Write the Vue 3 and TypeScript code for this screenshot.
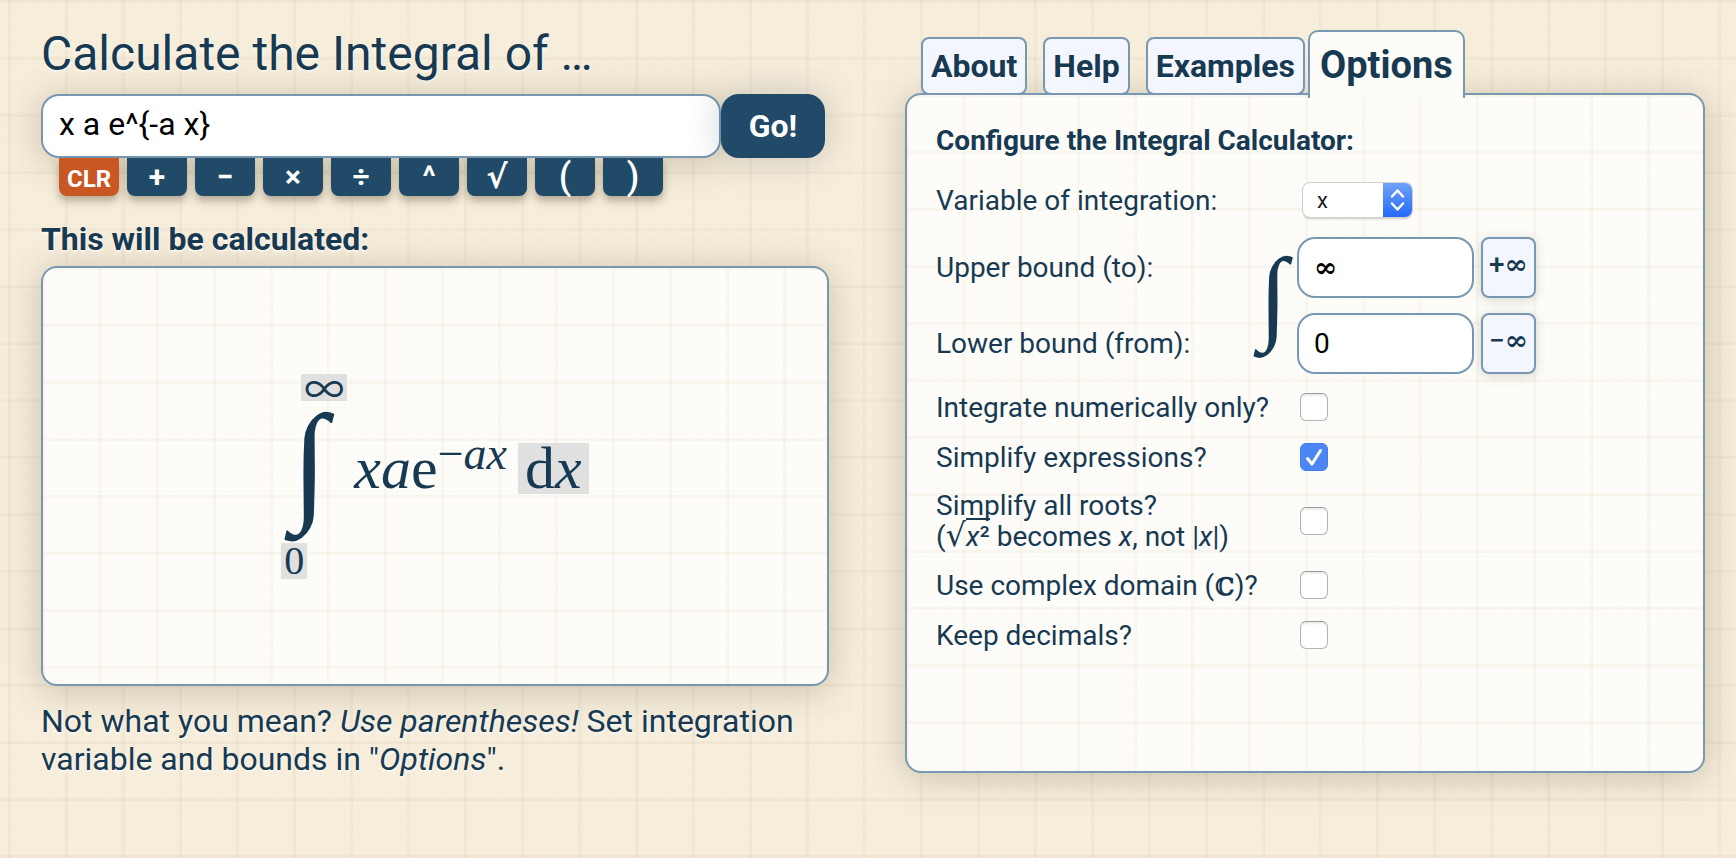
<script setup lang="ts">
import { ref } from 'vue'

interface Check {
  id: string
  label: string
  checked: boolean
}

const expression = ref('x a e^{-a x}')
const operators = ['+', '−', '×', '÷', '^', '√', '(', ')']
const tallOperators = ['(', ')']
const tabs = ['About', 'Help', 'Examples', 'Options']
const activeTab = ref('Options')
const variable = ref('x')
const upper = ref('∞')
const lower = ref('0')
const checks = ref<Check[]>([
  { id: 'numeric', label: 'Integrate numerically only?', checked: false },
  { id: 'simplify', label: 'Simplify expressions?', checked: true },
  { id: 'roots', label: '', checked: false },
  { id: 'complex', label: '', checked: false },
  { id: 'decimals', label: 'Keep decimals?', checked: false },
])
</script>

<template>
  <main class="page">
    <section class="left">
      <h1><label for="expr">Calculate the Integral of …</label></h1>
      <form class="entry" @submit.prevent>
        <input id="expr" v-model="expression" class="expr" type="text" autocomplete="off" spellcheck="false" />
        <button class="go" type="submit">Go!</button>
      </form>
      <div class="keys">
        <button class="key clear" type="button" @click="expression = ''">CLR</button>
        <button
          v-for="op in operators"
          :key="op"
          class="key"
          :class="{ tall: tallOperators.includes(op), root: op === '√' }"
          type="button"
          @click="expression += op"
        >{{ op }}</button>
      </div>
      <h2>This will be calculated:</h2>
      <div class="panel preview">
        <div class="formula">
          <div class="operator">
            <span class="limit infinity">∞</span>
            <span class="sign">∫</span>
            <span class="limit zero">0</span>
          </div>
          <div class="integrand">
            <span class="body"><i>xa</i>e<span class="power">−<i>ax</i></span></span>
            <span class="differential">d<i>x</i></span>
          </div>
        </div>
      </div>
      <p class="hint">Not what you mean? <i>Use parentheses!</i> Set integration variable and bounds in "<i>Options</i>".</p>
    </section>

    <section class="right">
      <nav class="tabs">
        <button
          v-for="tab in tabs"
          :key="tab"
          type="button"
          class="tab"
          :class="{ active: tab === activeTab }"
          @click="activeTab = tab"
        >{{ tab }}</button>
      </nav>
      <div class="panel options">
        <h3>Configure the Integral Calculator:</h3>
        <div class="row">
          <label for="variable">Variable of integration:</label>
          <span class="picker">
            <select id="variable" v-model="variable">
              <option>x</option>
              <option>a</option>
            </select>
            <svg class="arrows" viewBox="0 0 29 34" aria-hidden="true">
              <path d="M9 13.500l5.500-6L20 13.500M9 20.500l5.500 6L20 20.500" />
            </svg>
          </span>
        </div>
        <div class="bounds">
          <span class="bounds-sign">∫</span>
          <div class="row bound">
            <label for="upper">Upper bound (to):</label>
            <input id="upper" v-model="upper" type="text" class="value symbol" />
            <button type="button" class="preset" @click="upper = '∞'">+<span class="symbol">∞</span></button>
          </div>
          <div class="row bound">
            <label for="lower">Lower bound (from):</label>
            <input id="lower" v-model="lower" type="text" class="value" />
            <button type="button" class="preset" @click="lower = '-∞'">−<span class="symbol">∞</span></button>
          </div>
        </div>
        <div v-for="check in checks" :key="check.id" class="row check" :class="check.id">
          <label v-if="check.id === 'roots'" :for="check.id">Simplify all roots?<br />(<span class="radical">√</span><span class="radicand"><i>x</i>²</span> becomes <i>x</i>, not |<i>x</i>|)</label>
          <label v-else-if="check.id === 'complex'" :for="check.id">Use complex domain (<span class="field">ℂ</span>)?</label>
          <label v-else :for="check.id">{{ check.label }}</label>
          <span class="tick">
            <input :id="check.id" v-model="check.checked" type="checkbox" />
            <svg v-if="check.checked" viewBox="0 0 28 28" aria-hidden="true"><path d="M7.500 15.500l4.500 5.500L20.500 7.500" /></svg>
          </span>
        </div>
      </div>
    </section>
  </main>
</template>

<style>
body {
  margin: 0;
  background-color: #f6eddb;
  background-image:
    linear-gradient(90deg, rgba(150, 110, 80, 0.05) 3px, transparent 3px),
    linear-gradient(rgba(150, 110, 80, 0.05) 3px, transparent 3px),
    linear-gradient(90deg, rgba(150, 110, 80, 0.012) 1px, transparent 1px),
    linear-gradient(rgba(150, 110, 80, 0.012) 1px, transparent 1px);
  background-size: 57px 57px, 57px 57px, 14px 14px, 14px 14px;
  background-position: 8px 0;
}
</style>

<style scoped>
* {
  box-sizing: border-box;
}
.page {
  --ink: #173a52;
  --navy: #204a68;
  --edge: #7898b2;
  --glow: 0 4px 36px rgba(70, 70, 30, 0.26);
  display: grid;
  grid-template-columns: minmax(0, 788fr) minmax(0, 800fr);
  column-gap: 76px;
  padding: 25px 31px 40px 41px;
  color: var(--ink);
  font-family: Roboto, "Noto Sans", sans-serif;
  text-shadow: 0 2px 3px rgba(255, 255, 255, 0.8);
}
h1, h2, h3, p {
  margin: 0;
}
button, input, select {
  font-family: inherit;
  color: inherit;
  text-shadow: inherit;
  margin: 0;
}
button {
  cursor: pointer;
  padding: 0;
}
h1 {
  font-size: 48px;
  font-weight: 400;
  line-height: 58px;
  margin-bottom: 11px;
}
.entry {
  position: relative;
  z-index: 1;
  display: flex;
  height: 64px;
  margin-right: 4px;
}
.expr {
  flex: 1;
  min-width: 0;
  padding: 0 16px 4px;
  border: 2px solid var(--edge);
  border-radius: 18px;
  background: #fff;
  box-shadow: var(--glow);
  color: #000;
  font-size: 32px;
}
.go {
  width: 104px;
  border: 0;
  border-radius: 18px;
  background: var(--navy);
  box-shadow: 0 0 36px rgba(70, 70, 70, 0.26);
  color: #fff;
  font-size: 32px;
  font-weight: 700;
  text-shadow: none;
}
.keys {
  position: relative;
  z-index: 1;
  display: flex;
  gap: 8px;
  padding-left: 18px;
}
.key {
  width: 60px;
  height: 38px;
  border: 0;
  border-radius: 0 0 8px 8px;
  background: var(--navy);
  color: #fff;
  font-size: 30px;
  font-weight: 700;
  line-height: 38px;
  text-shadow: none;
  box-shadow: 0 5px 9px rgba(60, 50, 20, 0.35);
}
.clear {
  background: #c85724;
  font-size: 24px;
  line-height: 43px;
}
.tall {
  font-size: 36px;
  font-weight: 500;
}
.root {
  font-family: "DejaVu Sans", sans-serif;
  font-size: 32px;
}
h2 {
  font-size: 32px;
  font-weight: 700;
  line-height: 40px;
  margin: 23px 0 7px;
}
.panel {
  border: 2px solid var(--edge);
  border-radius: 16px;
  background-color: #fdfcf8;
  background-image:
    linear-gradient(90deg, rgba(190, 180, 110, 0.08) 3px, transparent 3px),
    linear-gradient(rgba(190, 180, 110, 0.08) 3px, transparent 3px),
    linear-gradient(90deg, rgba(150, 150, 110, 0.02) 1px, transparent 1px),
    linear-gradient(rgba(150, 150, 110, 0.02) 1px, transparent 1px);
  background-size: 57px 57px, 57px 57px, 14px 14px, 14px 14px;
  background-position: -1px -1px;
  box-shadow: var(--glow);
}
.preview {
  display: flex;
  align-items: center;
  justify-content: center;
  height: 420px;
}
.formula {
  display: flex;
  align-items: center;
  gap: 7px;
  font-family: "Liberation Serif", serif;
  text-shadow: none;
}
.operator {
  display: flex;
  flex-direction: column;
  align-items: center;
  width: 66px;
}
.limit {
  background: #e0e0e0;
  font-size: 40px;
}
.infinity {
  align-self: flex-end;
  padding: 0 3px;
  font-family: "Noto Sans CJK SC", sans-serif;
  line-height: 27px;
}
.zero {
  align-self: flex-start;
  padding: 0 3px;
  line-height: 36px;
}
.sign {
  height: 142px;
  padding-right: 10px;
  font-size: 132px;
  font-style: italic;
  line-height: 122px;
}
.integrand {
  display: flex;
  align-items: center;
  gap: 11px;
  margin-bottom: 16px;
  font-size: 60px;
  line-height: 51px;
}
.power {
  font-size: 46px;
  line-height: 0;
  vertical-align: 19px;
}
.differential {
  padding: 0 7px;
  background: #e0e0e0;
}
.hint {
  margin-top: 16px;
  font-size: 32px;
  line-height: 38px;
}
.right {
  padding-top: 5px;
}
.tabs {
  position: relative;
  z-index: 1;
  display: flex;
  align-items: flex-end;
  margin: 0 0 -5px 16px;
}
.tab {
  height: 58px;
  margin: 0 16px 3px 0;
  padding: 0 8px;
  border: 2px solid var(--edge);
  border-radius: 8px;
  background: #f3f6ff;
  font-size: 32px;
  font-weight: 700;
}
.tab:nth-child(3) {
  margin-right: 3px;
}
.tab.active {
  height: 68px;
  margin: 0;
  padding: 0 10px;
  border-bottom: 0;
  border-radius: 10px 10px 0 0;
  background: #fcfbf7;
  font-size: 38px;
}
.options {
  min-height: 680px;
  padding: 28px 29px;
  font-size: 28px;
}
h3 {
  font-size: 28px;
  font-weight: 700;
  line-height: 36px;
  margin-bottom: 12px;
}
.row {
  display: grid;
  grid-template-columns: 361px minmax(0, 1fr);
  align-items: center;
  min-height: 50px;
  line-height: 31px;
}
.row:not(.bound, .check) {
  min-height: 58px;
}
.picker {
  display: flex;
  width: 109px;
  height: 34px;
  margin-left: 6px;
  border-radius: 7px;
  overflow: hidden;
  background: #fff;
  box-shadow: 0 0 0 1px #d0d0d0, 0 2px 2px rgba(0, 0, 0, 0.2);
}
select {
  flex: 1;
  min-width: 0;
  padding: 0 0 0 14px;
  border: 0;
  background: transparent;
  appearance: none;
  color: #222;
  font-size: 22px;
}
.arrows {
  width: 29px;
  height: 34px;
  background: linear-gradient(#71a2f8, #2469f8);
}
.arrows path {
  fill: none;
  stroke: #fff;
  stroke-width: 2.500;
  stroke-linecap: round;
  stroke-linejoin: round;
}
.bounds {
  position: relative;
  padding-bottom: 1px;
}
.bounds-sign {
  position: absolute;
  left: 323px;
  top: 12px;
  font-family: "Liberation Serif", serif;
  font-size: 104px;
  font-style: italic;
  line-height: 108px;
  text-shadow: none;
}
.bound {
  grid-template-columns: 361px 177px max-content;
  min-height: 76px;
}
.value {
  width: 177px;
  height: 61px;
  padding: 0 15px;
  border: 2px solid var(--edge);
  border-radius: 18px;
  background: #fff;
  color: #000;
  font-size: 28px;
}
.preset {
  height: 61px;
  margin-left: 7px;
  padding: 0 6px 5px;
  border: 2px solid var(--edge);
  border-radius: 8px;
  background: #f3f6ff;
  font-size: 28px;
  font-weight: 500;
  box-shadow: 0 2px 12px rgba(70, 70, 50, 0.2);
}
.symbol {
  font-family: "DejaVu Serif", serif;
  font-weight: 700;
}
.roots {
  min-height: 78px;
}
.radical {
  font-family: "DejaVu Sans", sans-serif;
  font-size: 32px;
  line-height: 0;
}
.radicand {
  border-top: 2px solid currentColor;
}
.field {
  font-family: "DejaVu Math TeX Gyre", "DejaVu Serif", serif;
  font-size: 24px;
  font-weight: 700;
  line-height: 1;
}
.tick {
  position: relative;
  width: 28px;
  height: 28px;
  margin-left: 3px;
}
.tick input {
  display: block;
  width: 28px;
  height: 28px;
  border: 1px solid #b4b4b4;
  border-top-color: #999;
  border-radius: 6px;
  background: #fff;
  appearance: none;
  box-shadow: inset 0 2px 2px rgba(0, 0, 0, 0.08);
}
.tick input:checked {
  border-color: #3f7df0;
  background: #4c86f5;
  box-shadow: none;
}
.tick svg {
  position: absolute;
  inset: 0;
  pointer-events: none;
}
.tick path {
  fill: none;
  stroke: #fff;
  stroke-width: 3;
  stroke-linecap: round;
  stroke-linejoin: round;
}
</style>
